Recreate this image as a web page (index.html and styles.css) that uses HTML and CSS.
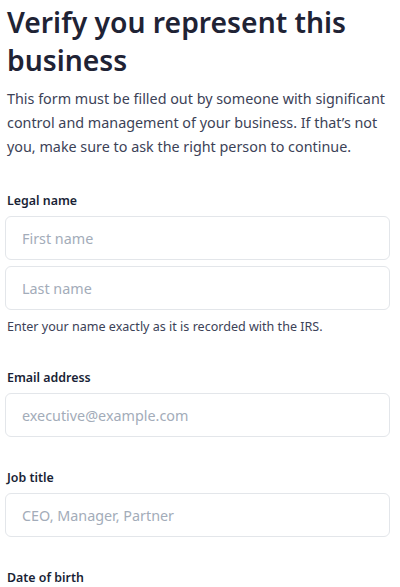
FILE: index.html
```html
<!DOCTYPE html>
<html lang="en">
<head>
    <meta charset="UTF-8">
    <meta name="viewport" content="width=device-width, initial-scale=1.0">
    <title>Verify you represent this business</title>
    <link rel="stylesheet" href="styles.css">
</head>
<body>
    <main class="verify">
        <h1 class="verify-title">Verify you represent this business</h1>
        <p class="verify-intro">This form must be filled out by someone with significant control and management of your business. If that’s not you, make sure to ask the right person to continue.</p>

        <form class="verify-form">
            <!-- Legal name -->
            <div class="field">
                <label class="field-label" for="first-name">Legal name</label>
                <input class="field-input" type="text" id="first-name" placeholder="First name">
                <input class="field-input" type="text" id="last-name" placeholder="Last name">
                <p class="field-help">Enter your name exactly as it is recorded with the IRS.</p>
            </div>

            <!-- Email -->
            <div class="field">
                <label class="field-label" for="email">Email address</label>
                <input class="field-input" type="email" id="email" placeholder="executive@example.com">
            </div>

            <!-- Job title -->
            <div class="field">
                <label class="field-label" for="job-title">Job title</label>
                <input class="field-input" type="text" id="job-title" placeholder="CEO, Manager, Partner">
            </div>

            <!-- Date of birth -->
            <div class="field">
                <label class="field-label" for="dob">Date of birth</label>
            </div>
        </form>
    </main>
</body>
</html>
```

FILE: styles.css
```css
body, html {
    margin: 0;
    padding: 0;
    background: #fff;
    font-family: "Noto Sans", "Open Sans", sans-serif;
    color: #1a1f36;
}

.verify {
    padding: 0 10px 0 5px;
}

.verify-title {
    font-size: 28.3px;
    line-height: 38px;
    font-weight: 600;
    margin: 3px 0 0 2px;
    color: #1f2335;
}

.verify-intro {
    font-size: 14.35px;
    line-height: 24px;
    color: #3c4257;
    margin: 8px 0 0 2px;
}

/* Form */
.verify-form {
    display: flex;
    flex-direction: column;
    gap: 31px;
    margin-top: 32px;
}

.field {
    display: flex;
    flex-direction: column;
    gap: 6px;
}

.field-label {
    font-size: 12.4px;
    line-height: 19px;
    font-weight: 600;
    color: #1a1f36;
    margin-left: 2px;
}

.field-input {
    box-sizing: border-box;
    width: 100%;
    height: 44px;
    padding: 0 16px;
    font-family: inherit;
    font-size: 14.35px;
    color: #1a1f36;
    background: #fff;
    border: 1px solid #e3e6ea;
    border-radius: 6px;
    outline: none;
}

.field-input::placeholder {
    color: #a3acb9;
}

.field-help {
    font-size: 12.55px;
    line-height: 20px;
    color: #3c4257;
    margin: 1px 0 0 2px;
}
```
